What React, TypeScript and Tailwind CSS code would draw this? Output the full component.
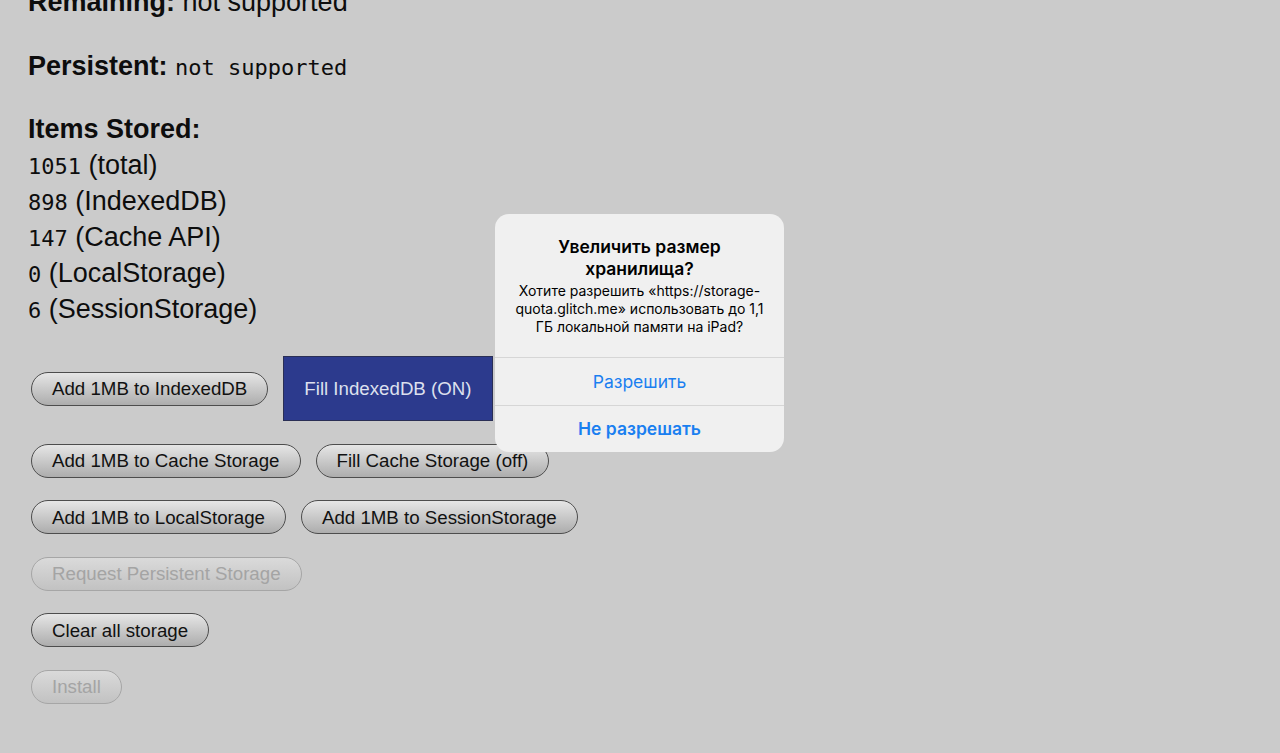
import type { ReactNode } from "react";

function Pill({ children, disabled }: { children: ReactNode; disabled?: boolean }) {
  return (
    <button
      disabled={disabled}
      className={
        disabled
          ? "h-[34px] rounded-full border border-[#a6a6a6] bg-linear-to-b from-[#dadada] to-[#c2c2c2] px-[20px] pt-[2px] text-[18.7px] leading-none text-[#a4a4a4] whitespace-nowrap"
          : "h-[34px] rounded-full border border-[#4d4d4d] bg-linear-to-b from-[#e6e6e6] to-[#adadad] px-[20px] pt-[2px] text-[18.7px] leading-none text-[#111] whitespace-nowrap"
      }
    >
      {children}
    </button>
  );
}

function Mono({ children }: { children: ReactNode }) {
  return (
    <span className="font-['DejaVu_Sans_Mono',monospace] text-[22px] leading-none">
      {children}
    </span>
  );
}

export default function App() {
  return (
    <div className="relative h-[753px] overflow-hidden bg-[#cbcbcb] font-['Liberation_Sans',Arial,sans-serif] text-[27px] leading-[36px] text-[#0d0d0d]">
      <div className="-mt-[16px] px-[28px]">
        <p>
          <b>Remaining:</b> not supported
        </p>
        <p className="mt-[28px]">
          <b>Persistent:</b> <Mono>not supported</Mono>
        </p>
        <div className="mt-[27px]">
          <p>
            <b>Items Stored:</b>
          </p>
          <p>
            <Mono>1051</Mono> (total)
          </p>
          <p>
            <Mono>898</Mono> (IndexedDB)
          </p>
          <p>
            <Mono>147</Mono> (Cache API)
          </p>
          <p>
            <Mono>0</Mono> (LocalStorage)
          </p>
          <p>
            <Mono>6</Mono> (SessionStorage)
          </p>
        </div>

        <div className="mt-[29px] flex flex-col items-start gap-[22.5px] pl-[3px]">
          <div className="flex items-center gap-[15px]">
            <Pill>Add 1MB to IndexedDB</Pill>
            <button className="h-[65px] border border-[#2a2f55] bg-[#2c3a8d] px-[20px] pt-[2px] text-[18.7px] leading-none text-[#dde0ee] whitespace-nowrap">
              Fill IndexedDB (ON)
            </button>
          </div>
          <div className="flex items-center gap-[15px]">
            <Pill>Add 1MB to Cache Storage</Pill>
            <Pill>Fill Cache Storage (off)</Pill>
          </div>
          <div className="flex items-center gap-[15px]">
            <Pill>Add 1MB to LocalStorage</Pill>
            <Pill>Add 1MB to SessionStorage</Pill>
          </div>
          <Pill disabled>Request Persistent Storage</Pill>
          <Pill>Clear all storage</Pill>
          <Pill disabled>Install</Pill>
        </div>
      </div>

      <div className="absolute left-[495px] top-[214px] w-[289px] overflow-hidden rounded-[14px] bg-[#f0f0f0] font-['Inter','Noto_Sans',sans-serif] text-black">
        <div className="px-[12px] pt-[22px] pb-[21px] text-center">
          <div className="text-[17.5px] font-semibold leading-[22px]">
            Увеличить размер
            <br />
            хранилища?
          </div>
          <div className="mt-[2px] text-[14px] leading-[18px] whitespace-nowrap">
            Хотите разрешить «https://storage-
            <br />
            quota.glitch.me» использовать до 1,1
            <br />
            ГБ локальной памяти на iPad?
          </div>
        </div>
        <div className="flex h-[48px] items-center justify-center border-t border-[#d6d6d6] text-[17.5px] text-[#1a7ff0]">
          Разрешить
        </div>
        <div className="flex h-[47px] items-center justify-center border-t border-[#d6d6d6] text-[17.5px] font-semibold text-[#1a7ff0]">
          Не разрешать
        </div>
      </div>
    </div>
  );
}
